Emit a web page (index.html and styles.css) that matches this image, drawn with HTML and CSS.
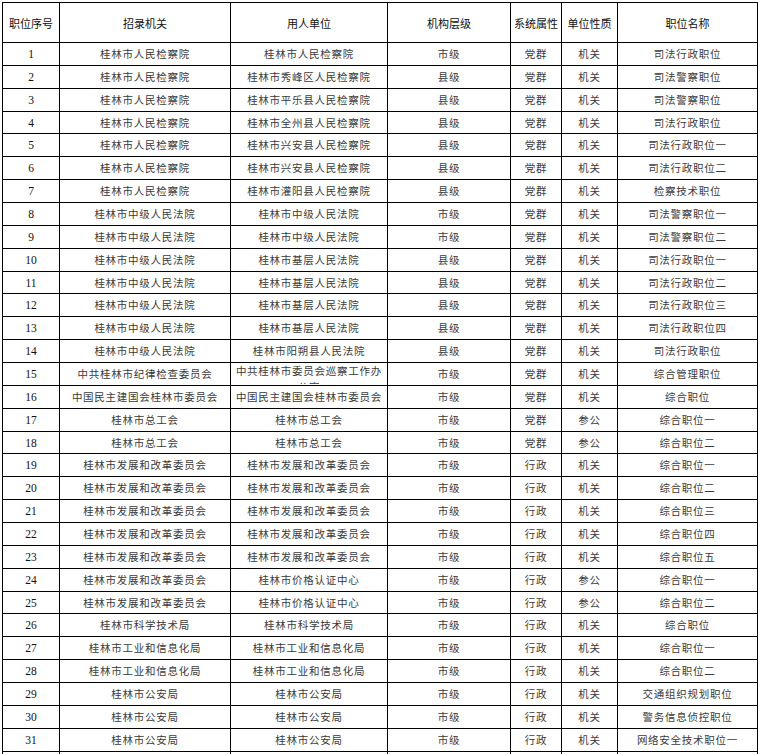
FILE: index.html
```html
<!DOCTYPE html>
<html lang="zh-CN">
<head>
<meta charset="utf-8">
<title>职位表</title>
<link rel="stylesheet" href="styles.css">
</head>
<body>
<table class="jobs">
  <colgroup>
    <col class="c1"><col class="c2"><col class="c3"><col class="c4"><col class="c5"><col class="c6"><col class="c7">
  </colgroup>
  <thead>
    <tr><th>职位序号</th><th>招录机关</th><th>用人单位</th><th>机构层级</th><th>系统属性</th><th>单位性质</th><th>职位名称</th></tr>
  </thead>
  <tbody>
    <tr><td class="num">1</td><td>桂林市人民检察院</td><td>桂林市人民检察院</td><td>市级</td><td>党群</td><td>机关</td><td>司法行政职位</td></tr>
    <tr><td class="num">2</td><td>桂林市人民检察院</td><td>桂林市秀峰区人民检察院</td><td>县级</td><td>党群</td><td>机关</td><td>司法警察职位</td></tr>
    <tr><td class="num">3</td><td>桂林市人民检察院</td><td>桂林市平乐县人民检察院</td><td>县级</td><td>党群</td><td>机关</td><td>司法警察职位</td></tr>
    <tr><td class="num">4</td><td>桂林市人民检察院</td><td>桂林市全州县人民检察院</td><td>县级</td><td>党群</td><td>机关</td><td>司法行政职位</td></tr>
    <tr><td class="num">5</td><td>桂林市人民检察院</td><td>桂林市兴安县人民检察院</td><td>县级</td><td>党群</td><td>机关</td><td>司法行政职位一</td></tr>
    <tr><td class="num">6</td><td>桂林市人民检察院</td><td>桂林市兴安县人民检察院</td><td>县级</td><td>党群</td><td>机关</td><td>司法行政职位二</td></tr>
    <tr><td class="num">7</td><td>桂林市人民检察院</td><td>桂林市灌阳县人民检察院</td><td>县级</td><td>党群</td><td>机关</td><td>检察技术职位</td></tr>
    <tr><td class="num">8</td><td>桂林市中级人民法院</td><td>桂林市中级人民法院</td><td>市级</td><td>党群</td><td>机关</td><td>司法警察职位一</td></tr>
    <tr><td class="num">9</td><td>桂林市中级人民法院</td><td>桂林市中级人民法院</td><td>市级</td><td>党群</td><td>机关</td><td>司法警察职位二</td></tr>
    <tr><td class="num">10</td><td>桂林市中级人民法院</td><td>桂林市基层人民法院</td><td>县级</td><td>党群</td><td>机关</td><td>司法行政职位一</td></tr>
    <tr><td class="num">11</td><td>桂林市中级人民法院</td><td>桂林市基层人民法院</td><td>县级</td><td>党群</td><td>机关</td><td>司法行政职位二</td></tr>
    <tr><td class="num">12</td><td>桂林市中级人民法院</td><td>桂林市基层人民法院</td><td>县级</td><td>党群</td><td>机关</td><td>司法行政职位三</td></tr>
    <tr><td class="num">13</td><td>桂林市中级人民法院</td><td>桂林市基层人民法院</td><td>县级</td><td>党群</td><td>机关</td><td>司法行政职位四</td></tr>
    <tr><td class="num">14</td><td>桂林市中级人民法院</td><td>桂林市阳朔县人民法院</td><td>县级</td><td>党群</td><td>机关</td><td>司法行政职位</td></tr>
    <tr><td class="num">15</td><td>中共桂林市纪律检查委员会</td><td class="top"><div class="clip">中共桂林市委员会巡察工作办公室</div></td><td>市级</td><td>党群</td><td>机关</td><td>综合管理职位</td></tr>
    <tr><td class="num">16</td><td>中国民主建国会桂林市委员会</td><td>中国民主建国会桂林市委员会</td><td>市级</td><td>党群</td><td>机关</td><td>综合职位</td></tr>
    <tr><td class="num">17</td><td>桂林市总工会</td><td>桂林市总工会</td><td>市级</td><td>党群</td><td>参公</td><td>综合职位一</td></tr>
    <tr><td class="num">18</td><td>桂林市总工会</td><td>桂林市总工会</td><td>市级</td><td>党群</td><td>参公</td><td>综合职位二</td></tr>
    <tr><td class="num">19</td><td>桂林市发展和改革委员会</td><td>桂林市发展和改革委员会</td><td>市级</td><td>行政</td><td>机关</td><td>综合职位一</td></tr>
    <tr><td class="num">20</td><td>桂林市发展和改革委员会</td><td>桂林市发展和改革委员会</td><td>市级</td><td>行政</td><td>机关</td><td>综合职位二</td></tr>
    <tr><td class="num">21</td><td>桂林市发展和改革委员会</td><td>桂林市发展和改革委员会</td><td>市级</td><td>行政</td><td>机关</td><td>综合职位三</td></tr>
    <tr><td class="num">22</td><td>桂林市发展和改革委员会</td><td>桂林市发展和改革委员会</td><td>市级</td><td>行政</td><td>机关</td><td>综合职位四</td></tr>
    <tr><td class="num">23</td><td>桂林市发展和改革委员会</td><td>桂林市发展和改革委员会</td><td>市级</td><td>行政</td><td>机关</td><td>综合职位五</td></tr>
    <tr><td class="num">24</td><td>桂林市发展和改革委员会</td><td>桂林市价格认证中心</td><td>市级</td><td>行政</td><td>参公</td><td>综合职位一</td></tr>
    <tr><td class="num">25</td><td>桂林市发展和改革委员会</td><td>桂林市价格认证中心</td><td>市级</td><td>行政</td><td>参公</td><td>综合职位二</td></tr>
    <tr><td class="num">26</td><td>桂林市科学技术局</td><td>桂林市科学技术局</td><td>市级</td><td>行政</td><td>机关</td><td>综合职位</td></tr>
    <tr><td class="num">27</td><td>桂林市工业和信息化局</td><td>桂林市工业和信息化局</td><td>市级</td><td>行政</td><td>机关</td><td>综合职位一</td></tr>
    <tr><td class="num">28</td><td>桂林市工业和信息化局</td><td>桂林市工业和信息化局</td><td>市级</td><td>行政</td><td>机关</td><td>综合职位二</td></tr>
    <tr><td class="num">29</td><td>桂林市公安局</td><td>桂林市公安局</td><td>市级</td><td>行政</td><td>机关</td><td>交通组织规划职位</td></tr>
    <tr><td class="num">30</td><td>桂林市公安局</td><td>桂林市公安局</td><td>市级</td><td>行政</td><td>机关</td><td>警务信息侦控职位</td></tr>
    <tr><td class="num">31</td><td>桂林市公安局</td><td>桂林市公安局</td><td>市级</td><td>行政</td><td>机关</td><td>网络安全技术职位一</td></tr>
    <tr><td class="num">32</td><td>桂林市公安局</td><td>桂林市公安局</td><td>市级</td><td>行政</td><td>机关</td><td>网络安全技术职位二</td></tr>
  </tbody>
</table>
</body>
</html>
```
FILE: styles.css
```css
html, body {
  margin: 0;
  padding: 0;
  background: #fff;
}

.jobs {
  margin: 2px 0 0 2px;
  border-collapse: collapse;
  table-layout: fixed;
  width: 755px;
  font-family: "Noto Sans CJK SC", "Noto Sans", sans-serif;
}

.c1 { width: 57px; }
.c2 { width: 171px; }
.c3 { width: 157px; }
.c4 { width: 123px; }
.c5 { width: 51px; }
.c6 { width: 56px; }
.c7 { width: 140px; }

.jobs th,
.jobs td {
  border: 1px solid #000;
  padding: 0 1px;
  text-align: center;
  vertical-align: middle;
  white-space: nowrap;
  overflow: hidden;
}

.jobs thead tr {
  height: 40px;
}

.jobs th {
  font-size: 11px;
  font-weight: normal;
  color: #111;
  line-height: 14px;
}

.jobs tbody tr {
  height: 22.87px;
}

.jobs td {
  font-size: 10.5px;
  letter-spacing: 0.75px;
  color: #3a3a3a;
  line-height: 14px;
}

.jobs td.num {
  font-family: "Liberation Serif", "Times New Roman", serif;
  font-size: 11.5px;
  letter-spacing: 0;
  color: #111;
}

.jobs td.top {
  vertical-align: top;
  white-space: normal;
}

.clip {
  height: 21px;
  line-height: 16px;
  overflow: hidden;
}
```
